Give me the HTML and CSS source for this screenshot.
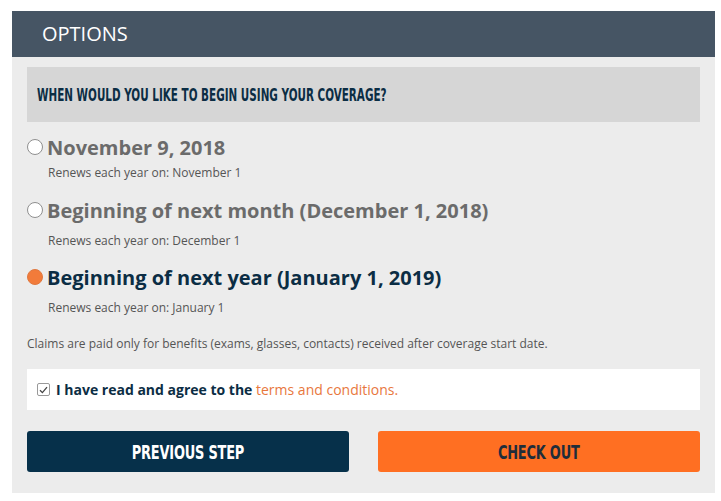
FILE: index.html
```html
<!DOCTYPE html>
<html lang="en">
<head>
    <meta charset="UTF-8">
    <meta name="viewport" content="width=device-width, initial-scale=1.0">
    <title>Options</title>
    <link rel="stylesheet" href="styles.css">
</head>
<body>
    <div class="panel">
        <div class="panel-head">OPTIONS</div>
        <div class="panel-body">
            <div class="question"><span class="narrow">WHEN WOULD YOU LIKE TO BEGIN USING YOUR COVERAGE?</span></div>

            <div class="option first">
                <div class="option-label"><span class="radio"></span>November 9, 2018</div>
                <div class="renew">Renews each year on: November 1</div>
            </div>
            <div class="option">
                <div class="option-label"><span class="radio"></span>Beginning of next month (December 1, 2018)</div>
                <div class="renew">Renews each year on: December 1</div>
            </div>
            <div class="option selected">
                <div class="option-label"><span class="radio"></span>Beginning of next year (January 1, 2019)</div>
                <div class="renew">Renews each year on: January 1</div>
            </div>

            <p class="claims">Claims are paid only for benefits (exams, glasses, contacts) received after coverage start date.</p>

            <div class="agree">
                <span class="check">
                    <svg width="9" height="8" viewBox="0 0 9 8"><path d="M1 4.2 L3.4 6.6 L8 1.2" fill="none" stroke="#444" stroke-width="1.3"/></svg>
                </span>
                <b>I have read and agree to the</b>&nbsp;<a href="#" class="terms">terms and conditions.</a>
            </div>

            <div class="buttons">
                <button class="btn btn-prev"><span class="narrow">PREVIOUS STEP</span></button>
                <button class="btn btn-checkout"><span class="narrow">CHECK OUT</span></button>
            </div>
        </div>
    </div>
</body>
</html>
```

FILE: styles.css
```css
body {
    margin: 0;
    font-family: "Open Sans", Arial, sans-serif;
    background: #fff;
}
.panel {
    width: 703px;
    margin: 11px 0 0 12px;
}
.panel-head {
    height: 46px;
    line-height: 46px;
    padding-left: 30px;
    background-color: #465564;
    color: #fff;
    font-size: 20px;
}
.panel-body {
    background-color: #ececec;
    padding: 10px 15px 21px;
}
/* no condensed display face offline, so squeeze DejaVu Condensed */
.narrow {
    display: inline-block;
    font-family: "DejaVu Sans Condensed", "DejaVu Sans", sans-serif;
    font-weight: bold;
    white-space: nowrap;
}
.question {
    height: 55px;
    line-height: 56px;
    padding-left: 10px;
    background-color: #d6d6d6;
    color: #0b2d44;
    font-size: 17px;
}
.question .narrow {
    transform: scaleX(0.68);
    transform-origin: left center;
    font-weight: 600;
}
.option {
    margin-top: 15px;
}
.option.first {
    margin-top: 12px;
}
.option.selected {
    margin-top: 14px;
}
.option-label {
    display: flex;
    align-items: center;
    height: 26px;
    font-size: 20px;
    font-weight: bold;
    color: #6b6b6b;
}
.option.selected .option-label {
    color: #0b2d44;
}
.radio {
    width: 14px;
    height: 14px;
    border: 1px solid #8f8f8f;
    border-radius: 50%;
    background: #fff;
    margin-right: 4px;
    flex-shrink: 0;
}
.option.selected .radio {
    background: #f27b3a;
    border-color: #e0783f;
}
.renew {
    margin: 9px 0 0 21px;
    font-size: 12px;
    line-height: 18px;
    color: #555;
}
.option.first .renew {
    margin-top: 4px;
}
.claims {
    margin: 18px 0 0;
    font-size: 12px;
    line-height: 18px;
    color: #555;
}
.agree {
    display: flex;
    align-items: center;
    height: 41px;
    margin-top: 16px;
    padding-left: 10px;
    background: #fff;
    font-size: 14px;
    color: #0b2d44;
}
.check {
    display: flex;
    align-items: center;
    justify-content: center;
    width: 11px;
    height: 11px;
    border: 1px solid #999;
    border-radius: 2px;
    margin-right: 6px;
}
.terms {
    color: #e8773d;
    text-decoration: none;
}
.buttons {
    display: flex;
    justify-content: space-between;
    margin-top: 21px;
}
.btn {
    width: 322px;
    height: 41px;
    border: none;
    border-radius: 3px;
    font-size: 20px;
    cursor: pointer;
}
.btn .narrow {
    transform: scaleX(0.72);
    letter-spacing: -0.3px;
}
.btn-prev {
    background-color: #06304a;
    color: #fff;
}
.btn-checkout {
    background-color: #ff6f22;
    color: #1f2d3a;
}
```
